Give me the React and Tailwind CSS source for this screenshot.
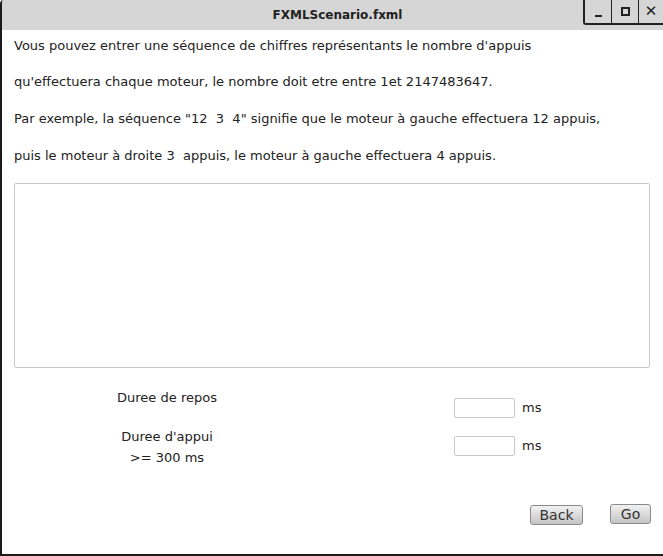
export default function App() {
  return (
    <div className="w-[663px] h-[556px] bg-white flex flex-col overflow-hidden text-[#222] font-['DejaVu_Sans',sans-serif] text-[13px] border-l-2 border-b-2 border-[#1a1a1a] rounded-tl-[4px]">
      <div className="h-[30px] shrink-0 bg-[#d6d6d6] flex items-center relative">
        <div className="flex-1 text-center font-bold text-[12px] text-[#222] pl-[10px]">FXMLScenario.fxml</div>
        <div className="absolute right-0 top-0 h-[25px] flex border-l-2 border-b-2 border-[#222] rounded-bl-[3px] bg-[#d6d6d6]">
          <div className="w-[27px] flex items-end justify-center pb-[6px] border-r border-[#222]">
            <div className="w-[7px] h-[2px] bg-[#222]" />
          </div>
          <div className="w-[27px] flex items-center justify-center border-r border-[#222]">
            <div className="w-[9px] h-[9px] border-2 border-[#222]" />
          </div>
          <div className="w-[24px] flex items-center justify-center text-[15px] font-bold">✕</div>
        </div>
      </div>
      <div className="flex flex-col px-[12px]">
        <p className="h-[37px] leading-[32px]">Vous pouvez entrer une séquence de chiffres représentants le nombre d'appuis</p>
        <p className="h-[37px] leading-[30px]">qu'effectuera chaque moteur, le nombre doit etre entre 1et 2147483647.</p>
        <p className="h-[37px] leading-[30px]">Par exemple, la séquence "12&nbsp;&nbsp;3&nbsp;&nbsp;4" signifie que le moteur à gauche effectuera 12 appuis,</p>
        <p className="h-[37px] leading-[30px]">puis le moteur à droite 3&nbsp;&nbsp;appuis, le moteur à gauche effectuera 4 appuis.</p>
        <div className="mt-[5px] w-[636px] h-[185px] border border-[#c8c8c8] rounded-[2px] bg-white" />
        <div className="flex mt-[13px]">
          <div className="w-[306px] flex flex-col items-center">
            <div className="h-[45px] pt-[7px]">Duree de repos</div>
            <div className="leading-[21px]">Duree d'appui</div>
            <div className="leading-[21px]">&gt;= 300 ms</div>
          </div>
          <div className="ml-[134px] flex flex-col pt-[17px] gap-[18px]">
            <div className="flex items-center gap-[7px]">
              <div className="w-[61px] h-[20px] border border-[#c8c8c8] rounded-[2px] bg-white" />
              <span>ms</span>
            </div>
            <div className="flex items-center gap-[7px]">
              <div className="w-[61px] h-[20px] border border-[#c8c8c8] rounded-[2px] bg-white" />
              <span>ms</span>
            </div>
          </div>
        </div>
        <div className="flex justify-end mt-[36px] gap-[27px] items-start">
          <button className="mt-[1px] w-[53px] h-[20px] rounded-[3px] border border-[#8a8a8a] bg-gradient-to-b from-[#f2f2f2] to-[#c4c4c4] text-[14px] leading-[19px] text-[#333]">Back</button>
          <button className="w-[41px] h-[20px] rounded-[3px] border border-[#8a8a8a] bg-gradient-to-b from-[#f2f2f2] to-[#c4c4c4] text-[14px] leading-[16px] text-[#333]">Go</button>
        </div>
      </div>
    </div>
  )
}
